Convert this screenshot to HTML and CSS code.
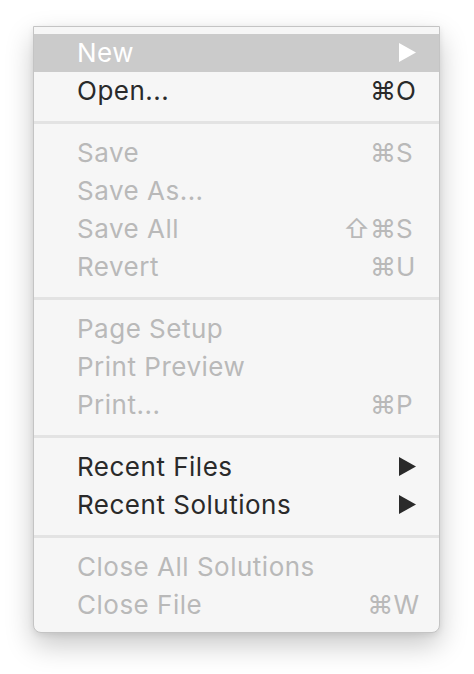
FILE: index.html
```html
<!DOCTYPE html>
<html>
<head>
<meta charset="utf-8">
<link rel="stylesheet" href="styles.css">
</head>
<body>
<div class="menu">
  <div class="item hl"><span class="label">New</span><svg class="arrow" viewBox="0 0 17 19" width="17" height="19"><polygon points="0,0 17,9.5 0,19"/></svg></div>
  <div class="item"><span class="label">Open...</span><span class="key"><span class="mod">⌘</span><span class="ch">O</span></span></div>
  <div class="sep"></div>
  <div class="item off"><span class="label">Save</span><span class="key"><span class="mod">⌘</span><span class="ch">S</span></span></div>
  <div class="item off"><span class="label">Save As...</span></div>
  <div class="item off"><span class="label">Save All</span><span class="key"><span class="mod">⇧⌘</span><span class="ch">S</span></span></div>
  <div class="item off"><span class="label">Revert</span><span class="key"><span class="mod">⌘</span><span class="ch">U</span></span></div>
  <div class="sep"></div>
  <div class="item off"><span class="label">Page Setup</span></div>
  <div class="item off"><span class="label">Print Preview</span></div>
  <div class="item off"><span class="label">Print...</span><span class="key"><span class="mod">⌘</span><span class="ch">P</span></span></div>
  <div class="sep"></div>
  <div class="item"><span class="label">Recent Files</span><svg class="arrow" viewBox="0 0 17 19" width="17" height="19"><polygon points="0,0 17,9.5 0,19"/></svg></div>
  <div class="item"><span class="label">Recent Solutions</span><svg class="arrow" viewBox="0 0 17 19" width="17" height="19"><polygon points="0,0 17,9.5 0,19"/></svg></div>
  <div class="sep"></div>
  <div class="item off"><span class="label">Close All Solutions</span></div>
  <div class="item off"><span class="label">Close File</span><span class="key"><span class="mod">⌘</span><span class="ch">W</span></span></div>
</div>
</body>
</html>
```
FILE: styles.css
```css
html, body {
  margin: 0;
  padding: 0;
  background: #ffffff;
}
body {
  font-family: Inter, "Liberation Sans", sans-serif;
  width: 474px;
  height: 674px;
  overflow: hidden;
}
.menu {
  margin: 26px 0 0 33px;
  width: 405px;
  background: #f6f6f6;
  border: 1px solid #c4c4c4;
  border-radius: 0 0 8px 8px;
  box-shadow: 0 12px 28px rgba(0, 0, 0, 0.22), 0 2px 6px rgba(0, 0, 0, 0.08);
  padding: 7px 0 8px;
}
.item {
  height: 38px;
  box-sizing: border-box;
  display: flex;
  align-items: center;
  padding: 0 20px 2px 43px;
  font-size: 26px;
  letter-spacing: 0.5px;
  color: #2a2a2a;
}
.item.off {
  color: #b9b9b9;
}
.item.hl {
  background: #cbcbcb;
  color: #ffffff;
}
.label {
  flex: 1;
  white-space: nowrap;
}
.key {
  display: flex;
  width: 89px;
  white-space: nowrap;
  letter-spacing: 0;
}
.mod {
  width: 66px;
  text-align: right;
}
.ch {
  flex: 1;
  text-align: left;
}
.arrow {
  fill: currentColor;
  margin-right: 3px;
  margin-top: 1px;
}
.sep {
  height: 24px;
  display: flex;
  align-items: center;
}
.sep::before {
  content: "";
  display: block;
  width: 100%;
  height: 3px;
  background: #e3e3e3;
}
```
